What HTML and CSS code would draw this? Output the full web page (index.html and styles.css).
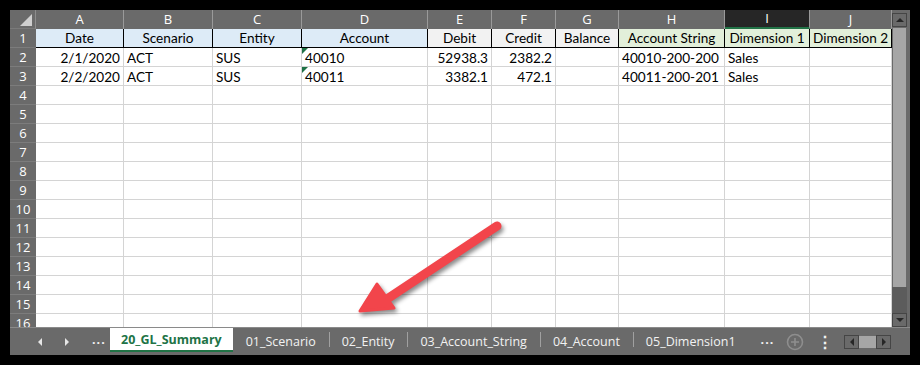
FILE: index.html
```html
<!DOCTYPE html>
<html lang="en">
<head>
    <meta charset="UTF-8">
    <meta name="viewport" content="width=device-width, initial-scale=1.0">
    <title>GL Summary</title>
    <link rel="stylesheet" href="styles.css">
</head>
<body>

<div class="window">
    <div class="sheet-area">
        <div class="grid" id="grid">
            <!-- column letters -->
            <div class="corner"></div>
            <div class="col-head">A</div>
            <div class="col-head">B</div>
            <div class="col-head">C</div>
            <div class="col-head">D</div>
            <div class="col-head">E</div>
            <div class="col-head">F</div>
            <div class="col-head">G</div>
            <div class="col-head">H</div>
            <div class="col-head selected">I</div>
            <div class="col-head">J</div>

            <!-- row 1: headers -->
            <div class="row-head">1</div>
            <div class="cell title blue">Date</div>
            <div class="cell title blue">Scenario</div>
            <div class="cell title blue">Entity</div>
            <div class="cell title blue">Account</div>
            <div class="cell title grey">Debit</div>
            <div class="cell title grey">Credit</div>
            <div class="cell title grey">Balance</div>
            <div class="cell title green">Account String</div>
            <div class="cell title green">Dimension 1</div>
            <div class="cell title green">Dimension 2</div>

            <!-- row 2 -->
            <div class="row-head">2</div>
            <div class="cell num">2/1/2020</div>
            <div class="cell">ACT</div>
            <div class="cell">SUS</div>
            <div class="cell flag">40010</div>
            <div class="cell num">52938.3</div>
            <div class="cell num">2382.2</div>
            <div class="cell"></div>
            <div class="cell">40010-200-200</div>
            <div class="cell">Sales</div>
            <div class="cell"></div>

            <!-- row 3 -->
            <div class="row-head">3</div>
            <div class="cell num">2/2/2020</div>
            <div class="cell">ACT</div>
            <div class="cell">SUS</div>
            <div class="cell flag">40011</div>
            <div class="cell num">3382.1</div>
            <div class="cell num">472.1</div>
            <div class="cell"></div>
            <div class="cell">40011-200-201</div>
            <div class="cell">Sales</div>
            <div class="cell"></div>
        </div>

        <div class="vscroll">
            <div class="sbtn"><span class="tri up"></span></div>
            <div class="vthumb"></div>
            <div class="vtrack"></div>
            <div class="sbtn"><span class="tri down"></span></div>
        </div>
    </div>

    <div class="tabbar">
        <div class="tab-nav">
            <span class="tri left light"></span>
            <span class="tri right light"></span>
            <span class="dots">...</span>
        </div>
        <div class="tab active">20_GL_Summary</div>
        <div class="tab">01_Scenario</div>
        <div class="tab">02_Entity</div>
        <div class="tab">03_Account_String</div>
        <div class="tab">04_Account</div>
        <div class="tab">05_Dimension1</div>
        <div class="tab-tools">
            <span class="dots">...</span>
            <svg class="add" width="18" height="18" viewBox="0 0 18 18">
                <circle cx="9" cy="9" r="7.5" fill="none" stroke="#8e8e8e" stroke-width="1.6"/>
                <path d="M9 5v8M5 9h8" stroke="#8e8e8e" stroke-width="1.6"/>
            </svg>
            <span class="vdots">&#8942;</span>
            <div class="hscroll">
                <div class="sbtn small"><span class="tri left"></span></div>
                <div class="hthumb"></div>
                <div class="sbtn small"><span class="tri right"></span></div>
            </div>
        </div>
    </div>

    <svg class="arrow" width="160" height="110" viewBox="0 0 160 110">
        <line x1="147" y1="15" x2="34" y2="90" stroke="#f2454b" stroke-width="9" stroke-linecap="round"/>
        <polygon points="10,100 27,73 44,97" fill="#f2454b" stroke="#f2454b" stroke-width="3" stroke-linejoin="round"/>
    </svg>
</div>

<script>
    // empty rows 4 to 16
    let grid = document.getElementById("grid");
    for (let r = 4; r <= 16; r++) {
        let row = `<div class="row-head">${r}</div>`;
        for (let c = 0; c < 10; c++) {
            row += `<div class="cell"></div>`;
        }
        grid.innerHTML += row;
    }
</script>

</body>
</html>
```

FILE: styles.css
```css
* { box-sizing: border-box; }
body { margin: 0; padding: 10px; background: #000; font-family: Lato, "Liberation Sans", sans-serif; }

.window {
    position: relative;
    width: 900px;
    height: 345px;
    background: #6a6a6a;
    display: flex;
    flex-direction: column;
    overflow: hidden;
}

.sheet-area { display: flex; height: 317px; }

.grid {
    width: 882px;
    height: 317px;
    overflow: hidden;
    display: grid;
    grid-template-columns: 26px 88px 89px 89px 126px 64px 64px 63px 106px 85px 82px;
    grid-auto-rows: 19px;
    background: #fff;
}

.corner, .col-head, .row-head {
    background: #6a6a6a;
    color: #fff;
    font-family: "Open Sans", "Noto Sans", sans-serif;
    font-size: 13px;
    line-height: 18px;
    text-align: center;
}
.corner { position: relative; border-right: 1px solid #8c8c8c; border-bottom: 1px solid #7a7a7a; }
.corner::after {
    content: "";
    position: absolute;
    right: 3px;
    bottom: 2px;
    width: 12px;
    height: 12px;
    background: #cfcfcf;
    clip-path: polygon(100% 0, 100% 100%, 0 100%);
}
.col-head { border-right: 1px solid #9a9a9a; }
.col-head.selected { background: #262626; border-bottom: 2px solid #217346; line-height: 17px; }
.row-head { border-bottom: 1px solid #7c7c7c; line-height: 19px; }

.cell {
    border-right: 1px solid #d4d4d4;
    border-bottom: 1px solid #d4d4d4;
    padding: 2px 3px 0;
    font-size: 13.6px;
    line-height: 17px;
    color: #000;
    white-space: nowrap;
    overflow: hidden;
}
.num { text-align: right; }
.title { text-align: center; border-right-color: #000; border-bottom-color: #000; padding-top: 1px; }
.blue { background: #ddebf7; }
.grey { background: #f2f2f2; }
.green { background: #e2efda; }
.flag { position: relative; }
.flag::before {
    content: "";
    position: absolute;
    left: 0;
    top: 0;
    border-top: 6px solid #1e7145;
    border-right: 6px solid transparent;
}

/* scroll bars */
.vscroll {
    width: 15px;
    margin-right: 3px;
    padding-top: 3px;
    display: flex;
    flex-direction: column;
}
.sbtn {
    height: 14px;
    border: 1px solid #454545;
    background: #6a6a6a;
    display: flex;
    align-items: center;
    justify-content: center;
}
.vthumb { height: 259px; background: #a6a6a6; margin: 1px 1px 0; }
.vtrack { flex: 1; background: #5c5c5c; }

.tri { width: 0; height: 0; border: 4px solid transparent; }
.tri.up { border-bottom: 4px solid #262626; border-top-width: 0; }
.tri.down { border-top: 4px solid #262626; border-bottom-width: 0; }
.tri.left { border-right: 4px solid #262626; border-left-width: 0; }
.tri.right { border-left: 4px solid #262626; border-right-width: 0; }
.tri.light.left { border-right-color: #e6e6e6; }
.tri.light.right { border-left-color: #e6e6e6; }

/* sheet tabs */
.tabbar {
    height: 28px;
    display: flex;
    border-top: 1px solid #8a8a8a;
    color: #f2f2f2;
    font-family: "Open Sans", "Noto Sans", sans-serif;
    font-size: 12.5px;
}
.tab-nav {
    width: 100px;
    display: flex;
    align-items: center;
    padding-left: 28px;
    gap: 23px;
}
.dots { font-weight: bold; letter-spacing: 1px; line-height: 10px; padding-bottom: 4px; }
.tab {
    padding: 0 13px;
    display: flex;
    align-items: center;
    position: relative;
}
.tab + .tab::before {
    content: "";
    position: absolute;
    left: 0;
    top: 4px;
    height: 15px;
    border-left: 1px solid #a0a0a0;
}
.tab.active + .tab::before { display: none; }
.tab.active {
    background: #fff;
    color: #217346;
    font-weight: bold;
    border-bottom: 2px solid #217346;
    margin-bottom: 3px;
    padding: 0 11px;
}
.tab-tools {
    display: flex;
    align-items: center;
    padding-left: 12px;
}
.tab-tools .add { margin-left: 12px; }
.vdots { margin-left: 13px; font-size: 16px; font-weight: bold; }
.hscroll { display: flex; margin-left: 11px; height: 14px; }
.sbtn.small { width: 15px; }
.hthumb { width: 17px; background: #a6a6a6; margin: 1px 0; }

.arrow {
    position: absolute;
    left: 340px;
    top: 201px;
    overflow: visible;
    filter: drop-shadow(2px 3px 2px rgba(0, 0, 0, 0.45));
}
```
